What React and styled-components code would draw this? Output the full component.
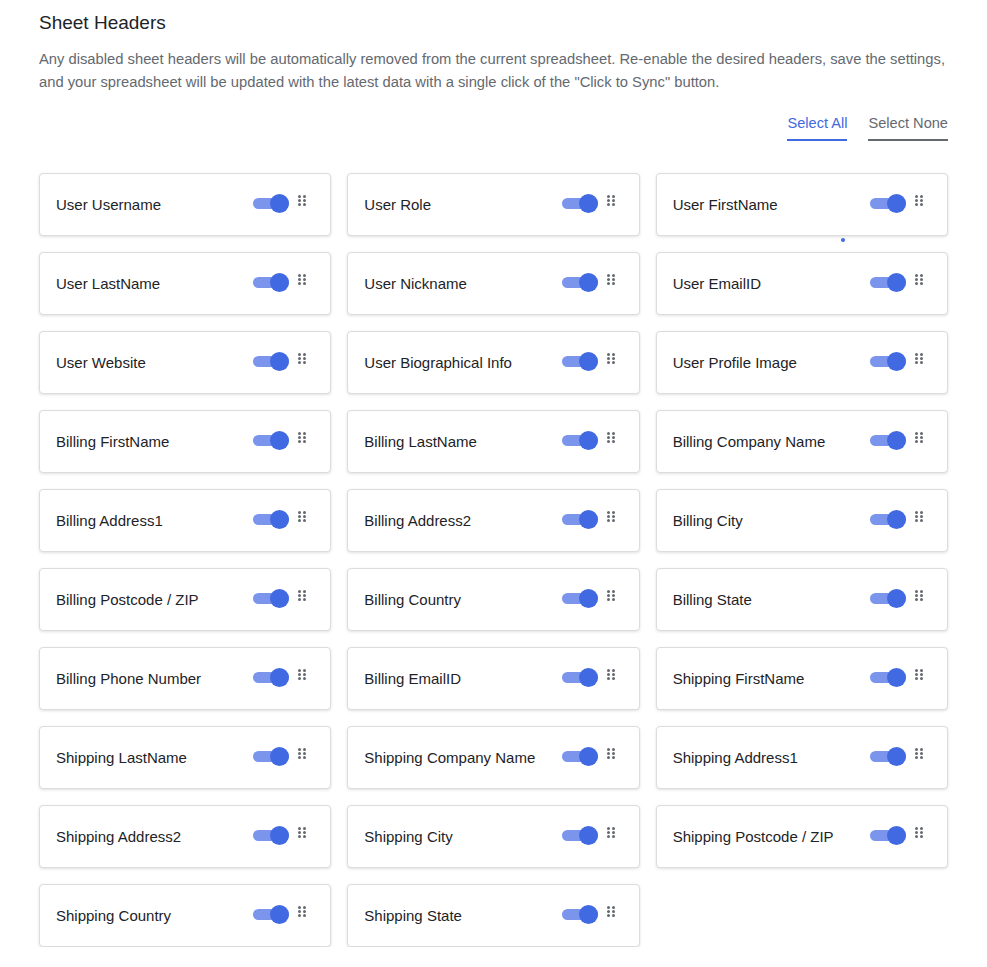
import React from 'react';
import styled, { createGlobalStyle } from 'styled-components';

const GlobalStyle = createGlobalStyle`
  body {
    margin: 0;
    background: #fff;
    font-family: "Liberation Sans", Arial, sans-serif;
  }
`;

const headers = [
  'User Username', 'User Role', 'User FirstName',
  'User LastName', 'User Nickname', 'User EmailID',
  'User Website', 'User Biographical Info', 'User Profile Image',
  'Billing FirstName', 'Billing LastName', 'Billing Company Name',
  'Billing Address1', 'Billing Address2', 'Billing City',
  'Billing Postcode / ZIP', 'Billing Country', 'Billing State',
  'Billing Phone Number', 'Billing EmailID', 'Shipping FirstName',
  'Shipping LastName', 'Shipping Company Name', 'Shipping Address1',
  'Shipping Address2', 'Shipping City', 'Shipping Postcode / ZIP',
  'Shipping Country', 'Shipping State',
];

const Page = styled.div`
  width: 909px;
  padding: 11px 0 0 39px;
`;

const Title = styled.h2`
  margin: 0;
  font-size: 19px;
  font-weight: 400;
  color: #1d2327;
  line-height: 24px;
`;

const Intro = styled.p`
  margin: 13px 0 0;
  font-size: 14.75px;
  line-height: 23px;
  color: #646970;
`;

const Actions = styled.div`
  display: flex;
  justify-content: flex-end;
  gap: 21px;
  margin-top: 20px;
`;

const ActionLink = styled.button`
  background: none;
  border: 0;
  padding: 0 0 7px;
  font-family: inherit;
  font-size: 14.6px;
  line-height: 18px;
  cursor: pointer;
  color: ${p => (p.$active ? '#4169e1' : '#646970')};
  border-bottom: 2px solid ${p => (p.$active ? '#4169e1' : '#646970')};
`;

const Grid = styled.div`
  position: relative;
  display: grid;
  grid-template-columns: repeat(3, 1fr);
  column-gap: 16px;
  row-gap: 16px;
  margin-top: 32px;
`;

const Card = styled.div`
  display: flex;
  align-items: center;
  height: 61px;
  padding: 0 24px 0 16px;
  background: #fff;
  border: 1px solid #dcdcde;
  border-radius: 4px;
  box-shadow: 0 1px 3px rgba(0, 0, 0, 0.12);
`;

const Label = styled.span`
  flex: 1;
  font-size: 15px;
  color: #1d2327;
`;

const Track = styled.span`
  position: relative;
  width: 36px;
  height: 11px;
  border-radius: 6px;
  background: #7b95ec;
  margin-top: -2px;
`;

const Thumb = styled.span`
  position: absolute;
  right: 0;
  top: -4px;
  width: 19px;
  height: 19px;
  border-radius: 50%;
  background: #4169e1;
`;

const Handle = styled.span`
  display: grid;
  grid-template-columns: repeat(2, 3px);
  grid-auto-rows: 3px;
  gap: 1px 2px;
  margin: -8px 0 0 9px;
  span {
    border-radius: 50%;
    background: #646970;
  }
`;

const Marker = styled.span`
  position: absolute;
  left: 802px;
  top: 65px;
  width: 4px;
  height: 4px;
  border-radius: 50%;
  background: #4169e1;
`;

const HeaderCard = ({ name }) => (
  <Card>
    <Label>{name}</Label>
    <Track><Thumb /></Track>
    <Handle>
      <span /><span /><span /><span /><span /><span />
    </Handle>
  </Card>
);

const App = () => (
  <Page>
    <GlobalStyle />
    <Title>Sheet Headers</Title>
    <Intro>
      Any disabled sheet headers will be automatically removed from the current spreadsheet. Re-enable the desired headers, save the settings, and your spreadsheet will be updated with the latest data with a single click of the "Click to Sync" button.
    </Intro>
    <Actions>
      <ActionLink $active>Select All</ActionLink>
      <ActionLink>Select None</ActionLink>
    </Actions>
    <Grid>
      {headers.map(h => <HeaderCard key={h} name={h} />)}
      <Marker />
    </Grid>
  </Page>
);

export default App;
